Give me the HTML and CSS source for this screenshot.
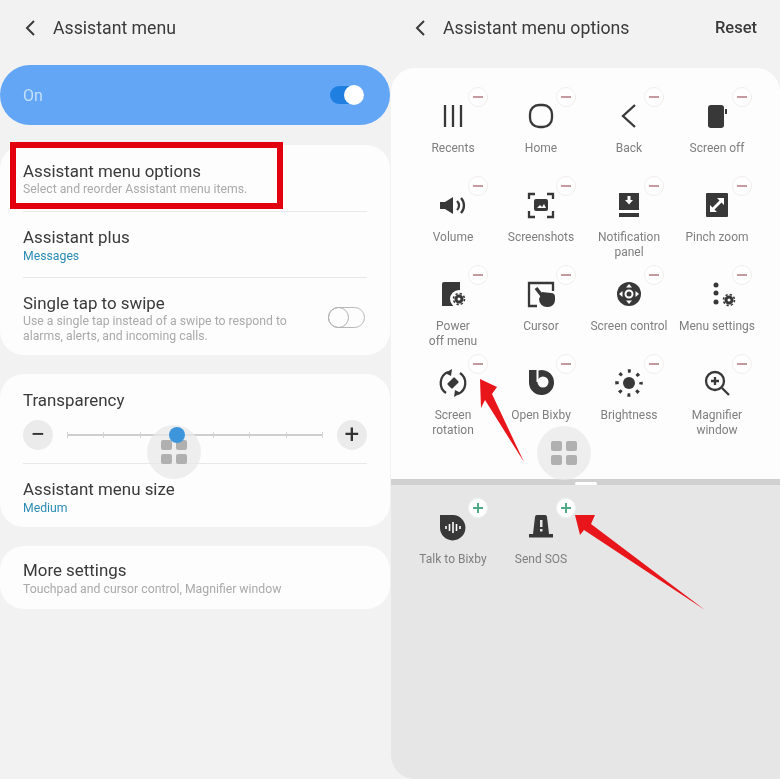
FILE: index.html
```html
<!DOCTYPE html>
<html>
<head>
    <title>Assistant menu</title>
    <meta name="viewport" content="width=device-width, initial-scale=1">
    <link rel="stylesheet" href="styles.css">
</head>
<body>
<div class="screen">
    <div class="panel">
        <div class="header">
            <svg class="back" viewBox="0 0 10 16"><polyline points="9,1 2,8 9,15"/></svg>
            <span class="header-title">Assistant menu</span>
        </div>
        <div class="master">
            <span>On</span>
            <span class="toggle-on"></span>
        </div>
        <div class="card">
            <div class="row row-first">
                <div class="row-title">Assistant menu options</div>
                <div class="row-sub">Select and reorder Assistant menu items.</div>
            </div>
            <div class="divider"></div>
            <div class="row">
                <div class="row-title">Assistant plus</div>
                <div class="row-sub row-value">Messages</div>
            </div>
            <div class="divider"></div>
            <div class="row row-toggle">
                <div>
                    <div class="row-title">Single tap to swipe</div>
                    <div class="row-sub">Use a single tap instead of a swipe to respond to<br>alarms, alerts, and incoming calls.</div>
                </div>
                <span class="toggle-off"></span>
            </div>
        </div>
        <div class="card">
            <div class="slider-block">
                <div class="row-title">Transparency</div>
                <div class="slider">
                    <span class="round-btn">&minus;</span>
                    <div class="track">
                        <i></i><i></i><i></i><i></i><i></i><i></i><i></i><i></i>
                        <span class="thumb" style="left: 40%"></span>
                    </div>
                    <span class="round-btn">+</span>
                </div>
            </div>
            <div class="divider"></div>
            <div class="row row-short">
                <div class="row-title">Assistant menu size</div>
                <div class="row-sub row-value">Medium</div>
            </div>
        </div>
        <div class="card">
            <div class="row row-short row-more">
                <div class="row-title">More settings</div>
                <div class="row-sub">Touchpad and cursor control, Magnifier window</div>
            </div>
        </div>
        <div class="red-box"></div>
        <div class="float-btn float-left"><i></i><i></i><i></i><i></i></div>
    </div>

    <div class="panel">
        <div class="header header-right">
            <svg class="back" viewBox="0 0 10 16"><polyline points="9,1 2,8 9,15"/></svg>
            <span class="header-title">Assistant menu options</span>
            <span class="reset">Reset</span>
        </div>
        <div class="options">
            <div class="item">
                <svg class="icon" viewBox="0 0 32 32"><path class="line" d="M8 5v22M16 5v22M24 5v22"/></svg>
                <span class="label">Recents</span><span class="badge minus"></span>
            </div>
            <div class="item">
                <svg class="icon" viewBox="0 0 32 32"><rect class="line" x="5" y="5" width="22" height="22" rx="9"/></svg>
                <span class="label">Home</span><span class="badge minus"></span>
            </div>
            <div class="item">
                <svg class="icon" viewBox="0 0 32 32"><polyline class="line" points="22,5 10,16 22,27"/></svg>
                <span class="label">Back</span><span class="badge minus"></span>
            </div>
            <div class="item">
                <svg class="icon" viewBox="0 0 32 32"><rect x="7" y="5" width="16" height="23" rx="3"/><rect x="24" y="9" width="2" height="5"/></svg>
                <span class="label">Screen off</span><span class="badge minus"></span>
            </div>
            <div class="item">
                <svg class="icon" viewBox="0 0 32 32"><path d="M3 13h5l8-5v17l-8-5H3z"/><path class="line" d="M20 12a6 6 0 0 1 0 9M24 9a11 11 0 0 1 0 15"/></svg>
                <span class="label">Volume</span><span class="badge minus"></span>
            </div>
            <div class="item">
                <svg class="icon" viewBox="0 0 32 32"><path class="line" d="M4 10V5h6M22 5h6v5M28 22v6h-6M10 28H4v-6"/><rect x="9" y="10" width="14" height="12" rx="2"/><path class="cut" d="M12 19l3-3 2 2 2-3 2 4z"/></svg>
                <span class="label">Screenshots</span><span class="badge minus"></span>
            </div>
            <div class="item">
                <svg class="icon" viewBox="0 0 32 32"><rect x="6" y="4" width="20" height="17"/><rect x="6" y="24" width="20" height="4"/><path class="cut" d="M14.500 7h3v4h2.500l-4 4.500-4-4.500h2.500z"/></svg>
                <span class="label">Notification<br>panel</span><span class="badge minus"></span>
            </div>
            <div class="item">
                <svg class="icon" viewBox="0 0 32 32"><rect x="5" y="4" width="22" height="24" rx="1"/><path class="cut" d="M9 23v-7l2.500 2.500 7-7L16 9h7v7l-2.500-2.500-7 7L16 23z"/></svg>
                <span class="label">Pinch zoom</span><span class="badge minus"></span>
            </div>
            <div class="item">
                <svg class="icon" viewBox="0 0 32 32"><path d="M7 4h16v24H5V6a2 2 0 0 1 2-2z"/><circle class="cut" cx="22" cy="21" r="9"/><circle class="gear" cx="22" cy="21" r="3"/><circle class="teeth" cx="22" cy="21" r="5.500"/></svg>
                <span class="label">Power<br>off menu</span><span class="badge minus"></span>
            </div>
            <div class="item">
                <svg class="icon" viewBox="0 0 32 32"><path class="line" d="M12 28H4V5h24v8"/><path class="line thick" d="M11 10l7 9"/><path d="M17 14l9 1a4 4 0 0 1 4 4v3a7 7 0 0 1-7 7h-1a8 8 0 0 1-8-8z"/></svg>
                <span class="label">Cursor</span><span class="badge minus"></span>
            </div>
            <div class="item">
                <svg class="icon" viewBox="0 0 32 32"><circle cx="16" cy="16" r="12"/><circle class="ring" cx="16" cy="16" r="3.500"/><path class="cut" d="M16 6l3 3.500h-6zM16 26l3-3.500h-6zM6 16l3.500-3v6zM26 16l-3.500-3v6z"/></svg>
                <span class="label">Screen control</span><span class="badge minus"></span>
            </div>
            <div class="item">
                <svg class="icon" viewBox="0 0 32 32"><circle cx="15" cy="7" r="2.500"/><circle cx="15" cy="15" r="2.500"/><circle cx="15" cy="24" r="2.500"/><circle class="gear" cx="28" cy="22" r="3"/><circle class="teeth" cx="28" cy="22" r="5.500"/></svg>
                <span class="label">Menu settings</span><span class="badge minus"></span>
            </div>
            <div class="item">
                <svg class="icon" viewBox="0 0 32 32"><path class="line" d="M9 26A12 12 0 0 1 11 5M23 6A12 12 0 0 1 21 27"/><path d="M15 2l-1 7-6-3zM17 30l1-7 6 3z"/><rect x="11" y="12.500" width="10" height="7" rx="1" transform="rotate(-45 16 16)"/></svg>
                <span class="label">Screen<br>rotation</span><span class="badge minus"></span>
            </div>
            <div class="item">
                <svg class="icon" viewBox="0 0 32 32"><path d="M4 3h9v.500A12.500 12.500 0 1 1 4 15.500z"/><circle class="cut" cx="18" cy="15" r="5.500"/><path class="white-line" d="M12.500 3v12"/></svg>
                <span class="label">Open Bixby</span><span class="badge minus"></span>
            </div>
            <div class="item">
                <svg class="icon" viewBox="0 0 32 32"><circle cx="16" cy="16" r="6"/><circle class="rays" cx="16" cy="16" r="12"/></svg>
                <span class="label">Brightness</span><span class="badge minus"></span>
            </div>
            <div class="item">
                <svg class="icon" viewBox="0 0 32 32"><circle class="line" cx="14" cy="14" r="9"/><path class="line" d="M21 21l7 7M14 10v8M10 14h8"/></svg>
                <span class="label">Magnifier<br>window</span><span class="badge minus"></span>
            </div>
            <div class="float-btn float-right"><i></i><i></i><i></i><i></i></div>
        </div>
        <div class="tray">
            <span class="handle"></span>
            <div class="item">
                <svg class="icon" viewBox="0 0 32 32"><path d="M3 4h13a12.700 12.700 0 1 1-13 12.500z"/><path class="white-line thin" d="M9 15v3M12.500 13v7M16 11v11M19.500 13v7M23 15v3"/></svg>
                <span class="label">Talk to Bixby</span><span class="badge plus"></span>
            </div>
            <div class="item">
                <svg class="icon" viewBox="0 0 32 32"><path d="M12 4h8a2 2 0 0 1 2 2l2 17H8l2-17a2 2 0 0 1 2-2z"/><rect x="4" y="23" width="24" height="3.500"/><rect class="cut" x="15" y="9" width="2.500" height="7"/><rect class="cut" x="15" y="18" width="2.500" height="2.500"/></svg>
                <span class="label">Send SOS</span><span class="badge plus"></span>
            </div>
        </div>
    </div>

    <svg class="arrows" viewBox="0 0 780 779">
        <polygon points="480,379 497,387 492,394 524,462 485,400 481,408"/>
        <polygon points="575,515 595,515 591,524 705,610 584,530 580,535"/>
    </svg>
</div>
</body>
</html>
```

FILE: styles.css
```css
html, body {
    margin: 0;
    padding: 0;
}
body {
    background: #f2f2f2;
    font-family: Roboto, "Liberation Sans", sans-serif;
    color: #3a3a3a;
}
.screen {
    position: relative;
    display: flex;
    width: 780px;
    height: 779px;
    overflow: hidden;
    filter: blur(0.6px);
}
.panel {
    position: relative;
    width: 390px;
    display: flex;
    flex-direction: column;
}

/* header */
.header {
    height: 65px;
    padding: 0 23px 10px 25px;
    box-sizing: border-box;
    display: flex;
    align-items: center;
    gap: 18px;
    flex-shrink: 0;
}
.header-right {
    height: 68px;
    padding-bottom: 13px;
}
.back {
    width: 10px;
    height: 16px;
    fill: none;
    stroke: #3a3a3a;
    stroke-width: 2;
}
.header-title {
    font-size: 17.7px;
}
.reset {
    margin-left: auto;
    font-size: 16.5px;
    font-weight: 500;
}

/* left panel */
.master {
    height: 60px;
    background: #63a6f5;
    border-radius: 30px;
    padding: 0 26px 0 23px;
    margin-bottom: 20px;
    display: flex;
    align-items: center;
    justify-content: space-between;
    color: #c4e0fb;
    font-size: 16px;
}
.toggle-on {
    position: relative;
    width: 34px;
    height: 18px;
    background: #1f7fe0;
    border-radius: 9px;
}
.toggle-on::after {
    content: "";
    position: absolute;
    right: 0;
    top: -1px;
    width: 20px;
    height: 20px;
    background: #fff;
    border-radius: 50%;
}
.toggle-off {
    position: relative;
    width: 35px;
    height: 19px;
    border: 1px solid #b8b8b8;
    border-radius: 11px;
    margin: 0 2px 3px 0;
}
.toggle-off::after {
    content: "";
    position: absolute;
    left: -1px;
    top: -1px;
    width: 19px;
    height: 19px;
    border: 1px solid #b0b0b0;
    border-radius: 50%;
}
.card {
    background: #fdfdfd;
    border-radius: 24px;
    margin-bottom: 19px;
}
.row {
    min-height: 65px;
    padding: 15px 23px 0;
    box-sizing: border-box;
}
.row-first {
    min-height: 66px;
    padding-top: 16px;
}
.row-toggle {
    display: flex;
    align-items: center;
    justify-content: space-between;
    padding-bottom: 11px;
}
.row-short {
    min-height: 63px;
}
.row-more {
    padding-top: 14px;
}
.row-title {
    font-size: 16.9px;
    line-height: 20px;
}
.row-sub {
    font-size: 12.25px;
    line-height: 15px;
    color: #aaa;
    margin-top: 1px;
}
.row-more .row-sub {
    margin-top: 2px;
}
.row-value {
    color: #2b8cb4;
    margin-top: 2px;
}
.divider {
    height: 1px;
    background: #e8e8e8;
    margin: 0 23px;
}
.slider-block {
    padding: 16px 23px 13px;
}
.slider {
    display: flex;
    align-items: center;
    margin-top: 10px;
    gap: 14px;
}
.round-btn {
    width: 30px;
    height: 30px;
    flex-shrink: 0;
    border-radius: 50%;
    background: #ebebeb;
    color: #333;
    font-size: 26px;
    line-height: 29px;
    text-align: center;
}
.track {
    position: relative;
    flex: 1;
    height: 2px;
    background: #cecece;
    display: flex;
    justify-content: space-between;
    align-items: center;
}
.track i {
    width: 1px;
    height: 6px;
    background: #d4d4d4;
}
.thumb {
    position: absolute;
    top: -7px;
    width: 16px;
    height: 16px;
    background: #3d96dc;
    border-radius: 50%;
    z-index: 2;
}
.red-box {
    position: absolute;
    left: 10px;
    top: 142px;
    width: 273px;
    height: 67px;
    box-sizing: border-box;
    border: 6px solid #e2000f;
}
.float-btn {
    position: absolute;
    z-index: 1;
    width: 54px;
    height: 54px;
    padding: 15px 14px;
    box-sizing: border-box;
    border-radius: 50%;
    background: rgba(232, 232, 232, 0.75);
    display: grid;
    grid-template-columns: 11px 11px;
    grid-auto-rows: 10px;
    gap: 4px;
}
.float-btn i {
    background: #b0b0b0;
    border-radius: 2px;
}
.float-left {
    left: 147px;
    top: 425px;
}
.float-right {
    left: 146px;
    top: 358px;
}

/* right panel */
.options {
    position: relative;
    height: 411px;
    margin-left: 1px;
    padding: 32px 0 0 18px;
    box-sizing: border-box;
    background: #fdfdfd;
    border-radius: 24px 24px 0 0;
    display: grid;
    grid-template-columns: repeat(4, 88px);
    grid-auto-rows: 89px;
}
.item {
    position: relative;
    display: flex;
    flex-direction: column;
    align-items: center;
}
.icon {
    width: 32px;
    height: 32px;
    flex-shrink: 0;
    overflow: visible;
    fill: #383838;
}
.line {
    fill: none;
    stroke: #383838;
    stroke-width: 2.3;
}
.thick {
    stroke-width: 3.5;
}
.cut {
    fill: #fdfdfd;
}
.tray .cut {
    fill: #e6e6e6;
}
.white-line {
    fill: none;
    stroke: #fdfdfd;
    stroke-width: 2;
}
.thin {
    stroke-width: 1.6;
}
.ring {
    fill: none;
    stroke: #fdfdfd;
    stroke-width: 2;
}
.gear {
    fill: none;
    stroke: #383838;
    stroke-width: 3;
}
.teeth {
    fill: none;
    stroke: #383838;
    stroke-width: 1.6;
    stroke-dasharray: 2.3 2.02;
}
.rays {
    fill: none;
    stroke: #383838;
    stroke-width: 3.5;
    stroke-dasharray: 3 6.42;
    stroke-dashoffset: 1.5;
}
.label {
    margin-top: 9px;
    font-size: 12px;
    line-height: 15px;
    color: #7f7f7f;
    text-align: center;
    white-space: nowrap;
}
.badge {
    position: absolute;
    left: 59px;
    top: -13px;
    width: 18px;
    height: 18px;
    border-radius: 50%;
    background: #fefefe;
    border: 1px solid #f3eded;
}
.badge::before, .badge.plus::after {
    content: "";
    position: absolute;
    left: 4px;
    top: 8px;
    width: 10px;
    height: 1.5px;
    background: #c49a9e;
}
.badge.plus {
    border-color: #eef4f1;
}
.badge.plus::before, .badge.plus::after {
    background: #4fa886;
}
.badge.plus::after {
    left: 8px;
    top: 4px;
    width: 1.5px;
    height: 10px;
}
.tray {
    position: relative;
    flex: 1;
    margin-left: 1px;
    padding: 26px 0 0 18px;
    background: #e6e6e6;
    border-top: 6px solid #d0d0d0;
    border-radius: 0 0 0 24px;
    display: grid;
    grid-template-columns: repeat(4, 88px);
    grid-auto-rows: 89px;
}
.handle {
    position: absolute;
    left: 184px;
    top: -3px;
    width: 22px;
    height: 3px;
    border-radius: 2px;
    background: #fff;
}
.arrows {
    position: absolute;
    left: 0;
    top: 0;
    width: 780px;
    height: 779px;
    fill: #e8151b;
}
```
